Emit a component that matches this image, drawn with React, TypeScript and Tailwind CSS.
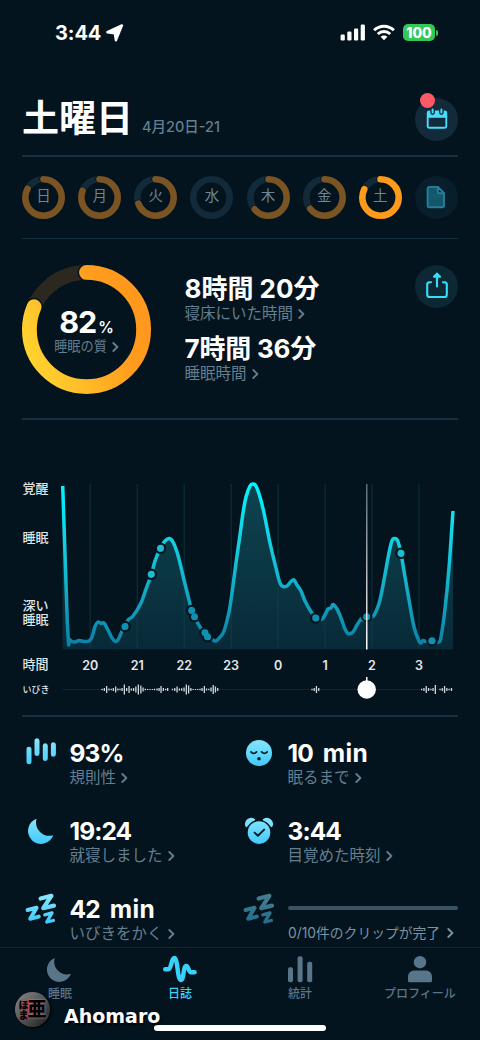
import type { ReactNode } from 'react';

const BG = '#04141e';

const days = [
  { label: '日', value: 0.825 },
  { label: '月', value: 0.805 },
  { label: '火', value: 0.69 },
  { label: '水', value: 0 },
  { label: '木', value: 0.633 },
  { label: '金', value: 0.64 },
  { label: '土', value: 0.82, active: true },
];

// Sleep depth curve, one point per sample
const curve: [number, number][] = [
  [70, 640], [72, 641.5], [75, 642], [79, 640.5], [84, 641.5], [89, 641], [92, 637], [95, 626.5],
  [98, 622], [101, 623.5], [104, 623], [108, 630], [112, 638], [116, 641.5], [119, 638], [122, 631],
  [125, 626.5], [128, 620], [133, 616], [141, 603], [146, 589], [151.5, 574], [155, 561],
  [160.5, 548], [165, 541], [169.5, 538.5], [173, 542], [177, 552], [180, 563], [184, 580],
  [188, 596], [191.7, 610.5], [194.5, 617], [200, 627], [205, 633], [208, 637], [213, 640],
  [216, 641], [220, 637], [224, 631], [229, 612], [232, 593], [236, 563], [240, 535], [243, 513],
  [246, 497], [250, 486], [253, 484], [256, 486], [260, 497], [264, 513], [270, 543], [275, 564],
  [279, 580], [282, 586], [287, 586], [291, 581.5], [294, 580], [297, 585], [301, 591], [305, 601],
  [310, 610], [316, 618], [322, 619], [326, 613], [328, 609], [331, 608], [333, 604.5], [337, 609],
  [341, 618], [345, 629], [348, 633.5], [353, 632], [357, 625], [361, 619], [363, 620], [367, 617],
  [373, 616.5], [377, 609], [380, 600], [384, 580], [388, 558], [391, 544], [393, 539], [397, 539.5],
  [399, 545], [401, 553], [404, 571], [409, 600], [414, 627], [419, 641], [421, 643], [423, 640.5],
  [426, 641.5], [432, 641], [439, 642], [441, 637], [445, 609], [449, 568], [453, 511],
];

const dots: [number, number][] = [
  [125, 626.5], [151.3, 574.3], [160.5, 548.3], [191.7, 610.5], [194.5, 616.7], [205, 632.8],
  [207.5, 636.8], [315.8, 618], [366.7, 616.7], [401, 553.3], [432, 640.7],
];

const hours = ['20', '21', '22', '23', '0', '1', '2', '3'];

// [x, height] of each snore bar
const snores: [number, number][] = [
  [102, 1.5], [104.3, 3], [106.6, 7], [108.9, 2], [111.2, 1.5], [113.3, 3], [115.6, 6], [117.9, 2],
  [120, 1.5], [122, 3], [124.3, 10], [126.6, 3], [129, 7], [131.3, 2], [133.5, 3], [135.8, 6],
  [138.3, 10], [140.8, 8], [143, 4], [145.3, 1.5], [147.6, 1], [150, 1], [152.4, 1], [154.5, 1.5],
  [157, 2], [159, 3], [161, 7], [163.3, 3], [165.6, 1.5], [167.6, 3], [172.4, 1.5], [174.7, 3],
  [177, 6], [179.3, 2], [181.6, 2.5], [184, 4], [186.3, 10], [188.6, 8], [190.8, 3], [193, 1],
  [195.4, 1], [197.7, 1], [200, 1.5], [202, 3], [204.3, 7], [206.5, 2], [208.8, 1.5], [211, 4],
  [213.2, 9], [215.4, 6], [217.7, 3],
  [312, 1.5], [314.2, 3], [316.4, 7], [318.7, 3],
  [421.6, 1.5], [423.9, 3], [426.2, 7], [428.5, 3], [430.8, 1.5], [433, 3], [435.3, 9],
  [440, 1.5], [442.2, 3], [444.5, 7], [446.8, 3], [449, 1.5], [451.4, 3],
];

function smooth(points: [number, number][]) {
  let d = `L${points[0][0]} ${points[0][1]}`;
  for (let i = 0; i < points.length - 1; i++) {
    const p0 = points[i - 1] || points[i];
    const p1 = points[i];
    const p2 = points[i + 1];
    const p3 = points[i + 2] || p2;
    d += `C${p1[0] + (p2[0] - p0[0]) / 6} ${p1[1] + (p2[1] - p0[1]) / 6} ${p2[0] - (p3[0] - p1[0]) / 6} ${p2[1] - (p3[1] - p1[1]) / 6} ${p2[0]} ${p2[1]}`;
  }
  return d;
}

const linePath = `M62.7 486L67.3 622L68.6 645${smooth(curve)}`;

type RingProps = {
  size: number;
  stroke: number;
  value: number;
  color: string;
  track: string;
  gap: number;
  children?: ReactNode;
};

const Ring = ({ size, stroke, value, color, track, gap, children }: RingProps) => {
  const c = size / 2;
  const r = (size - stroke) / 2;
  const len = 2 * Math.PI * r;
  const arc = {
    cx: c,
    cy: c,
    r,
    fill: 'none',
    strokeLinecap: 'round' as const,
    strokeDasharray: `${len * value} ${len}`,
    transform: `rotate(-90 ${c} ${c})`,
  };
  return (
    <svg width={size} height={size} viewBox={`0 0 ${size} ${size}`} className="shrink-0 overflow-visible">
      {children}
      <circle cx={c} cy={c} r={r} fill="none" stroke={track} strokeWidth={stroke} />
      {value > 0 && <circle {...arc} stroke={BG} strokeWidth={stroke + gap} />}
      {value > 0 && <circle {...arc} stroke={color} strokeWidth={stroke} />}
    </svg>
  );
};

const Chevron = () => (
  <svg width="7" height="10" viewBox="0 0 7 10" className="shrink-0">
    <path d="M1.3 1L5.4 5L1.3 9" fill="none" stroke="currentColor" strokeWidth="1.8" strokeLinecap="round" strokeLinejoin="round" />
  </svg>
);

const Divider = () => <div className="mx-[22px] h-[1.5px] shrink-0 bg-[#15303e]" />;

const StatusBar = () => (
  <div className="flex h-[65px] shrink-0 items-center justify-between pl-[55px] pr-[42px]">
    <div className="flex items-center gap-[5px]">
      <span className="text-[20px] font-bold leading-6 tracking-[-0.1px]">3:44</span>
      <svg width="18" height="18" viewBox="0 0 18 18">
        <path d="M1.4 8.2L16 1.4L9.9 16.3L8.8 9.4Z" fill="#fff" stroke="#fff" strokeWidth="2.4" strokeLinejoin="round" />
      </svg>
    </div>
    <div className="flex items-center">
      <svg width="25" height="17" viewBox="0 0 25 17" fill="#fff">
        <rect x="0.6" y="10.5" width="4.2" height="6" rx="1.2" />
        <rect x="7.3" y="7.5" width="4.2" height="9" rx="1.2" />
        <rect x="14" y="4.5" width="4.2" height="12" rx="1.2" />
        <rect x="20.7" y="0.5" width="4.2" height="16" rx="1.2" />
      </svg>
      <svg width="22" height="17" viewBox="0 0 22 17" className="ml-2" fill="none" stroke="#fff" strokeWidth="2.9">
        <path d="M1.1 6.3C6.7 0.8 15.3 0.8 20.9 6.3" />
        <path d="M4.8 10C8.3 6.6 13.7 6.6 17.2 10" />
        <path d="M11 16.2L7.6 12.8C9.5 11 12.5 11 14.4 12.8Z" fill="#fff" stroke="none" />
      </svg>
      <div className="ml-2 flex h-[17px] w-8 items-center justify-center rounded-[5px] bg-[#34c759] text-[14px] font-extrabold leading-none tracking-[-0.1px]">
        100
      </div>
      <div className="ml-px h-[6px] w-[2px] rounded-r-full bg-[#34c759]" />
    </div>
  </div>
);

const Header = () => (
  <div className="flex h-[90px] shrink-0 items-center justify-between px-[22px] pt-[18px]">
    <div className="-mt-px flex items-baseline">
      <h1 className="text-[37px] font-bold leading-[42px]">土曜日</h1>
      <span className="ml-[9px] text-[14.5px] font-medium text-[#637f90]">4月20日-21</span>
    </div>
    <button className="relative flex size-[43px] items-center justify-center rounded-full bg-[#122a39]">
      <svg width="22" height="22" viewBox="0 0 22 22" className="-mt-px">
        <rect x="1.7" y="3.5" width="18.6" height="16.3" rx="1.5" fill="none" stroke="#46dcfb" strokeWidth="1.9" />
        <path d="M1.7 3.5H20.3V9.8H1.7Z" fill="#46dcfb" />
        <path d="M6.6 1.5V4.6M15.4 1.5V4.6" stroke="#122a39" strokeWidth="4.6" strokeLinecap="round" />
        <path d="M6.6 1.5V4.6M15.4 1.5V4.6" stroke="#46dcfb" strokeWidth="2" strokeLinecap="round" />
      </svg>
      <span className="absolute -top-[5px] left-[4.5px] size-[15.5px] rounded-full bg-[#fe5967]" />
    </button>
  </div>
);

const WeekRow = () => (
  <div className="flex h-[81px] shrink-0 items-center justify-between px-[22px]">
    {days.map((day) => (
      <div key={day.label} className="grid size-[43px] place-items-center *:col-start-1 *:row-start-1">
        <Ring size={43} stroke={6.6} value={day.value} gap={1.8} track="#122a39" color={day.active ? '#ff9a1a' : '#7a5423'} />
        <span className="-mt-px text-[14.5px] leading-none text-[#6d8695]">{day.label}</span>
      </div>
    ))}
    <button className="flex size-[43px] items-center justify-center rounded-full bg-[#081e2a]">
      <svg width="20" height="24" viewBox="0 0 20 24" fill="#14566c" stroke="#267f99" strokeWidth="1.9" strokeLinejoin="round">
        <path d="M3.4 1.9H11.8L18 8.3V20.4A1.8 1.8 0 0 1 16.2 22.2H3.4A1.8 1.8 0 0 1 1.6 20.4V3.7A1.8 1.8 0 0 1 3.4 1.9Z" />
        <path d="M11.8 1.9V6.7A1.6 1.6 0 0 0 13.4 8.3H18Z" fill="#081e2a" />
        <path d="M4.5 11.3H15" strokeWidth="1" strokeDasharray="1 1" opacity="0.5" />
      </svg>
    </button>
  </div>
);

const Quality = () => (
  <div className="flex h-[179px] shrink-0 items-start px-[22px] pt-[26px]">
    <div className="grid size-[129px] place-items-center *:col-start-1 *:row-start-1">
      <Ring size={129} stroke={14.8} value={0.814} gap={3} track="#2c2820" color="url(#quality)">
        <defs>
          <linearGradient id="quality" gradientUnits="userSpaceOnUse" x1="95" y1="115" x2="45" y2="0">
            <stop offset="0" stopColor="#ff981c" />
            <stop offset="0.25" stopColor="#ff9c1e" />
            <stop offset="1" stopColor="#ffd530" />
          </linearGradient>
        </defs>
      </Ring>
      <div className="flex flex-col items-center pt-[6px]">
        <div className="flex items-baseline leading-[24px]">
          <span className="text-[30.5px] font-bold tracking-[-1px]">82</span>
          <span className="ml-[2px] text-[15.5px] font-semibold">%</span>
        </div>
        <div className="-mt-[2px] flex items-center gap-[5px] text-[13.2px] leading-[17px] text-[#637f90]">
          睡眠の質 <Chevron />
        </div>
      </div>
    </div>
    <div className="ml-[33.5px] flex-1 pt-[8px]">
      <div className="text-[26px] font-bold leading-[32px]">8時間 20分</div>
      <div className="flex items-center gap-[5px] text-[15.5px] leading-[18px] text-[#637f90]">
        寝床にいた時間 <Chevron />
      </div>
      <div className="mt-[10px] text-[26px] font-bold leading-[32px] tracking-[-0.2px]">7時間 36分</div>
      <div className="flex items-center gap-[5px] text-[15.5px] leading-[18px] text-[#637f90]">
        睡眠時間 <Chevron />
      </div>
    </div>
    <button className="flex size-[43px] items-center justify-center rounded-full bg-[#0d2835]">
      <svg width="24" height="28" viewBox="0 0 24 28" fill="none" stroke="#35dffb" strokeWidth="2.1" strokeLinecap="round" strokeLinejoin="round" className="-mt-px">
        <path d="M6 10.2H4.4A2.4 2.4 0 0 0 2.2 12.6V22.4A2.6 2.6 0 0 0 4.8 25H19.2A2.6 2.6 0 0 0 21.8 22.4V12.6A2.4 2.4 0 0 0 19.6 10.2H18" />
        <path d="M12 14.5V3" />
        <path d="M9 4.8L12 1.6L15 4.8Z" fill="#35dffb" />
      </svg>
    </button>
  </div>
);

const SleepChart = () => (
  <div className="h-[295.5px] shrink-0 px-[22px] pt-[50px]">
    <svg width="436" height="240" viewBox="22 470 436 240">
      <defs>
        <linearGradient id="line" gradientUnits="userSpaceOnUse" x1="0" y1="484" x2="0" y2="645">
          <stop offset="0" stopColor="#00f6ff" />
          <stop offset="0.4" stopColor="#14ccdf" />
          <stop offset="1" stopColor="#0c82a6" />
        </linearGradient>
        <linearGradient id="area" gradientUnits="userSpaceOnUse" x1="0" y1="484" x2="0" y2="649">
          <stop offset="0" stopColor="#0e4450" />
          <stop offset="1" stopColor="#082a38" />
        </linearGradient>
        <linearGradient id="cursor" x1="0" y1="0" x2="0" y2="1">
          <stop offset="0" stopColor="#5c6b74" />
          <stop offset="1" stopColor="#ffffff" />
        </linearGradient>
      </defs>
      <path d={`${linePath}V649.3H62.7Z`} fill="url(#area)" />
      {hours.map((hour, i) => (
        <rect key={hour} x={89.6 + i * 46.95} y="484" width="1.5" height="165" fill="#15424f" opacity="0.45" />
      ))}
      <path d={linePath} fill="none" stroke="url(#line)" strokeWidth="3.5" strokeLinejoin="round" />
      {dots.map(([x, y]) => (
        <circle key={x} cx={x} cy={y} r="4.6" fill="none" stroke="#05161f" strokeWidth="2.4" />
      ))}
      {dots.map(([x, y]) => (
        <circle key={x} cx={x} cy={y} r="3.5" fill={y < 600 ? '#1cbdd3' : '#1191b2'} />
      ))}
      <rect x="366" y="484" width="1.5" height="165.5" fill="url(#cursor)" />

      <g fill="#dfe5e8" fontSize="13" fontWeight="500">
        <text x="22.5" y="493">覚醒</text>
        <text x="22.5" y="542.3">睡眠</text>
        <text x="22.5" y="609.8">深い</text>
        <text x="22.5" y="623.8">睡眠</text>
        <text x="22.5" y="669.2">時間</text>
        <text x="22.5" y="692.6" fontSize="9">いびき</text>
      </g>
      <g fill="#e4e9ec" fontSize="12.5" fontWeight="600" textAnchor="middle">
        {hours.map((hour, i) => (
          <text key={hour} x={90.3 + i * 46.95} y="669.6">{hour}</text>
        ))}
      </g>

      <rect x="62.5" y="689" width="391" height="1" fill="#0c2836" />
      {snores.map(([x, h]) => (
        <rect key={x} x={x - 0.6} y={689.5 - h / 2} width="1.3" height={h} fill="#cfd8dc" />
      ))}
      <rect x="366" y="677" width="1.5" height="5" fill="#fff" />
      <circle cx="366.7" cy="689.5" r="9.2" fill="#fff" />
    </svg>
  </div>
);

const IconGradient = ({ id }: { id: string }) => (
  <defs>
    <linearGradient id={id} gradientUnits="userSpaceOnUse" x1="0" y1="3" x2="0" y2="32">
      <stop offset="0" stopColor="#8ae8fb" />
      <stop offset="1" stopColor="#3fc9fb" />
    </linearGradient>
  </defs>
);

const BarsIcon = () => (
  <svg width="36" height="36" viewBox="0 0 36 36" stroke="url(#g-bars)" strokeWidth="5" strokeLinecap="round">
    <IconGradient id="g-bars" />
    <path d="M6 14.2L6.01 26.8M14 5.8L14.01 18.5M22.3 10.8L22.31 23.5M30.4 9.8L30.41 19.2" />
  </svg>
);

const MoonIcon = () => (
  <svg width="36" height="36" viewBox="0 0 36 36">
    <IconGradient id="g-moon" />
    <path d="M13.6 5.7A13 13 0 1 0 30.3 22.2A13.4 13.4 0 0 1 13.6 5.7Z" fill="url(#g-moon)" />
  </svg>
);

const ZzzIcon = ({ id, className }: { id: string; className?: string }) => (
  <svg width="36" height="36" viewBox="0 0 36 36" fill="none" stroke={`url(#${id})`} strokeLinecap="round" strokeLinejoin="round" className={className}>
    <IconGradient id={id} />
    <path d="M17.6 7.5L28.4 4.8L20.2 17.2L31 14.6" strokeWidth="4.2" />
    <path d="M4.6 19L13.6 16.7L7.2 27.8L15.8 25.6" strokeWidth="3.9" />
    <path d="M21.8 23.8L29 21.9L23.8 31L30.4 29.5" strokeWidth="3.3" />
  </svg>
);

const FaceIcon = () => (
  <svg width="36" height="36" viewBox="0 0 36 36">
    <IconGradient id="g-face" />
    <circle cx="18" cy="18" r="13" fill="url(#g-face)" />
    <path d="M10 16.9Q12.7 20 15.6 16.9M20.6 16.9Q23.4 20 26.2 16.9" fill="none" stroke="#06202c" strokeWidth="1.7" strokeLinecap="round" />
    <circle cx="18" cy="23.8" r="1.8" fill="#06202c" />
  </svg>
);

const AlarmIcon = () => (
  <svg width="36" height="36" viewBox="0 0 36 36">
    <IconGradient id="g-alarm" />
    <path d="M5.4 13.2A5.2 5.2 0 0 1 13.2 6.8C10.2 8 7.2 10.4 5.4 13.2ZM30.6 13.2A5.2 5.2 0 0 0 22.8 6.8C25.8 8 28.8 10.4 30.6 13.2Z" fill="url(#g-alarm)" stroke="url(#g-alarm)" strokeWidth="1.8" strokeLinejoin="round" />
    <circle cx="18" cy="19.6" r="12.6" fill={BG} />
    <circle cx="18" cy="19.6" r="11.3" fill="url(#g-alarm)" />
    <path d="M13.6 19.6L16.9 22.8L23.2 16.6" fill="none" stroke="#06202c" strokeWidth="2" strokeLinecap="round" strokeLinejoin="round" />
  </svg>
);

type StatProps = { icon: ReactNode; value: string; unit?: string; label: string };

const Stat = ({ icon, value, unit, label }: StatProps) => (
  <div className="flex h-[78px] items-start">
    <div className="w-[46.5px] shrink-0">{icon}</div>
    <div className="pt-[3px]">
      <div className="text-[24.5px] font-bold leading-[30px] tracking-[-0.9px]">
        {value}
        {unit && <span className="ml-[10px] tracking-[0.4px]">{unit}</span>}
      </div>
      <div className="mt-px flex items-center gap-[5px] whitespace-nowrap text-[15.5px] leading-[18px] text-[#637f90]">
        {label} <Chevron />
      </div>
    </div>
  </div>
);

const Stats = () => (
  <div className="grid h-[230px] shrink-0 content-start overflow-hidden pl-[23px] pr-[22px] pt-[18px] [grid-template-columns:218px_217px]">
    <Stat icon={<BarsIcon />} value="93%" label="規則性" />
    <Stat icon={<FaceIcon />} value="10" unit="min" label="眠るまで" />
    <Stat icon={<MoonIcon />} value="19:24" label="就寝しました" />
    <Stat icon={<AlarmIcon />} value="3:44" label="目覚めた時刻" />
    <Stat icon={<ZzzIcon id="g-zzz" />} value="42" unit="min" label="いびきをかく" />
    <div className="flex h-[78px] items-start">
      <div className="w-[47px] shrink-0">
        <ZzzIcon id="g-zzz-dim" className="opacity-50" />
      </div>
      <div className="flex-1 pt-[15px]">
        <div className="h-1 rounded-full bg-[#385364]" />
        <div className="mt-[14px] flex items-center justify-between whitespace-nowrap pr-[4px] text-[13.8px] leading-[18px] text-[#7a93a2]">
          0/10件のクリップが完了 <Chevron />
        </div>
      </div>
    </div>
  </div>
);

const tabs = [
  {
    label: '睡眠',
    icon: <path d="M8.8 3A12.4 12.4 0 1 0 25 18.8A12.8 12.8 0 0 1 8.8 3Z" fill="currentColor" transform="translate(3 0)" />,
  },
  {
    label: '日誌',
    active: true,
    icon: (
      <path
        d="M2.2 14.3H5.4C8.4 14.3 8.3 3 11.3 3C15 3 14.2 25 17.8 25C21.2 25 20 11 23.2 11C26 11 25.2 17.3 28 17.3H31.6"
        fill="none"
        stroke="currentColor"
        strokeWidth="4.4"
        strokeLinecap="round"
      />
    ),
  },
  {
    label: '統計',
    icon: (
      <g fill="currentColor">
        <rect x="5" y="12.2" width="5" height="15" rx="2" />
        <rect x="14.6" y="1.2" width="5" height="26" rx="2" />
        <rect x="24.2" y="6.8" width="5" height="20.4" rx="2" />
      </g>
    ),
  },
  {
    label: 'プロフィール',
    icon: (
      <g fill="currentColor">
        <circle cx="17" cy="7.2" r="6.2" />
        <path d="M5 27.2V21.4A6 6 0 0 1 11 15.4H23A6 6 0 0 1 29 21.4V25.7A1.5 1.5 0 0 1 27.5 27.2H6.5A1.5 1.5 0 0 1 5 25.7Z" />
      </g>
    ),
  },
];

const TabBar = () => (
  <div className="relative h-[93px] shrink-0 border-t border-[#0f2630] pt-[7px]">
    <div className="grid grid-cols-4">
      {tabs.map((tab) => (
        <div key={tab.label} className={`flex flex-col items-center ${tab.active ? 'text-[#35d3fb]' : 'text-[#59758a]'}`}>
          <svg width="34" height="28" viewBox="0 0 34 28">{tab.icon}</svg>
          <span className="mt-[3px] text-[12px] font-medium leading-4">{tab.label}</span>
        </div>
      ))}
    </div>
    <div className="absolute bottom-[9px] left-[154px] h-[6px] w-[172px] rounded-full bg-white" />
    <div className="absolute left-[15px] top-[44px] flex items-center">
      <div className="flex size-[35px] items-center justify-center overflow-hidden rounded-full bg-linear-to-br from-[#8a8a8a] via-[#555555] to-[#1c1c1c] shadow-[1px_1px_3px_#000]">
        <div className="flex flex-col text-[10px] font-black leading-[10px] text-black [text-shadow:1px_0_1px_#c03040]">
          <span>ほ</span>
          <span>ま</span>
        </div>
        <span className="-ml-px text-[19px] font-black leading-none text-black [text-shadow:-1px_0_1px_#e8324a,0_0_2px_#bbb]">亜</span>
      </div>
      <span className="ml-[14px] mt-[12px] text-[19px] font-bold leading-6 [font-family:'DejaVu_Sans',sans-serif] [text-shadow:1px_2px_2px_#000]">
        Ahomaro
      </span>
    </div>
  </div>
);

export default function App() {
  return (
    <div className="flex h-[1040px] w-[480px] flex-col overflow-hidden bg-[#04141e] text-white [font-family:Inter,'Noto_Sans_CJK_JP',sans-serif]">
      <StatusBar />
      <Header />
      <Divider />
      <WeekRow />
      <Divider />
      <Quality />
      <Divider />
      <SleepChart />
      <Divider />
      <Stats />
      <TabBar />
    </div>
  );
}
